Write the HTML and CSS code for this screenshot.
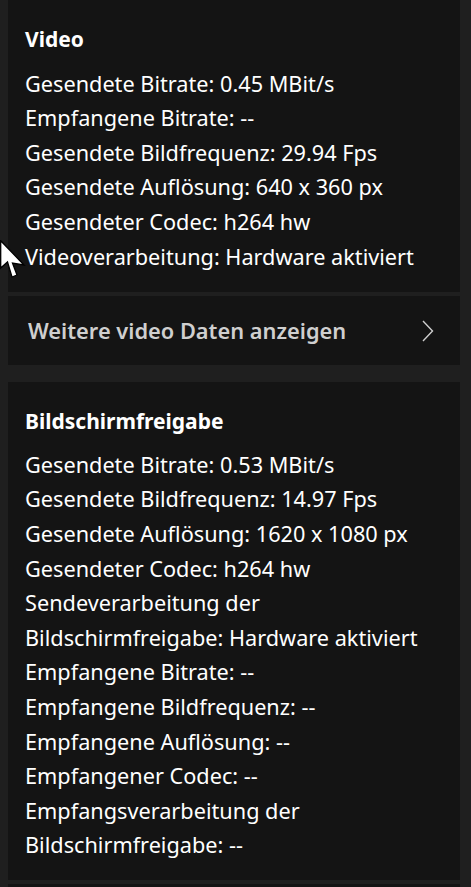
FILE: index.html
```html
<!DOCTYPE html>
<html lang="de">
<head>
<meta charset="utf-8">
<link rel="stylesheet" href="styles.css">
</head>
<body>
<div class="page">
  <section class="group">
    <div class="card">
      <h2 class="title">Video</h2>
      <div class="lines">
        <div>Gesendete Bitrate: 0.45 MBit/s</div>
        <div>Empfangene Bitrate: --</div>
        <div>Gesendete Bildfrequenz: 29.94 Fps</div>
        <div>Gesendete Auflösung: 640 x 360 px</div>
        <div>Gesendeter Codec: h264 hw</div>
        <div>Videoverarbeitung: Hardware aktiviert</div>
      </div>
    </div>
    <div class="more">
      <span>Weitere video Daten anzeigen</span>
      <svg class="chev" width="12" height="22" viewBox="0 0 12 22"><path d="M1 1 L10.5 11 L1 21" fill="none" stroke="#cfcfcf" stroke-width="1.4"/></svg>
    </div>
  </section>
  <section class="group">
    <div class="card card2">
      <h2 class="title">Bildschirmfreigabe</h2>
      <div class="lines">
        <div>Gesendete Bitrate: 0.53 MBit/s</div>
        <div>Gesendete Bildfrequenz: 14.97 Fps</div>
        <div>Gesendete Auflösung: 1620 x 1080 px</div>
        <div>Gesendeter Codec: h264 hw</div>
        <div>Sendeverarbeitung der Bildschirmfreigabe: Hardware aktiviert</div>
        <div>Empfangene Bitrate: --</div>
        <div>Empfangene Bildfrequenz: --</div>
        <div>Empfangene Auflösung: --</div>
        <div>Empfangener Codec: --</div>
        <div>Empfangsverarbeitung der Bildschirmfreigabe: --</div>
      </div>
    </div>
    <div class="more more-empty"></div>
  </section>
</div>
<svg class="cursor" width="28" height="42" viewBox="0 0 28 42"><path d="M0.7 0.7 L0.7 28 L7.5 22 L12 37 L17 35 L12.5 23 L24 25 Z" fill="#fff" stroke="#000" stroke-width="1.3" stroke-linejoin="miter"/></svg>
</body>
</html>
```
FILE: styles.css
```css
html, body {
  margin: 0;
  padding: 0;
  background: #1f1f1f;
  overflow: hidden;
}
body {
  width: 471px;
  height: 887px;
  position: relative;
  font-family: "Noto Sans", "Open Sans", sans-serif;
  color: #ffffff;
}
.page {
  padding: 0 11px 0 8px;
  display: flex;
  flex-direction: column;
  gap: 17px;
}
.group {
  display: flex;
  flex-direction: column;
  gap: 4px;
}
.card {
  background: #141414;
  padding: 22px 10px 18px 17px;
}
.card2 {
  padding-top: 22px;
  padding-bottom: 17px;
}
.title {
  margin: 0 0 10px 0;
  font-size: 21px;
  font-weight: 700;
  line-height: 34.6px;
}
.card2 .title {
  margin-bottom: 9px;
}
.lines {
  font-size: 21.7px;
  line-height: 34.6px;
  padding-right: 10px;
}
.more {
  background: #141414;
  height: 69px;
  display: flex;
  align-items: center;
  justify-content: space-between;
  padding: 0 26px 0 20px;
  font-size: 21.8px;
  font-weight: 600;
  color: #cfcfcf;
}
.more-empty {
  flex: none;
}
.chev {
  display: block;
}
.cursor {
  position: absolute;
  left: 0;
  top: 240px;
}
```
